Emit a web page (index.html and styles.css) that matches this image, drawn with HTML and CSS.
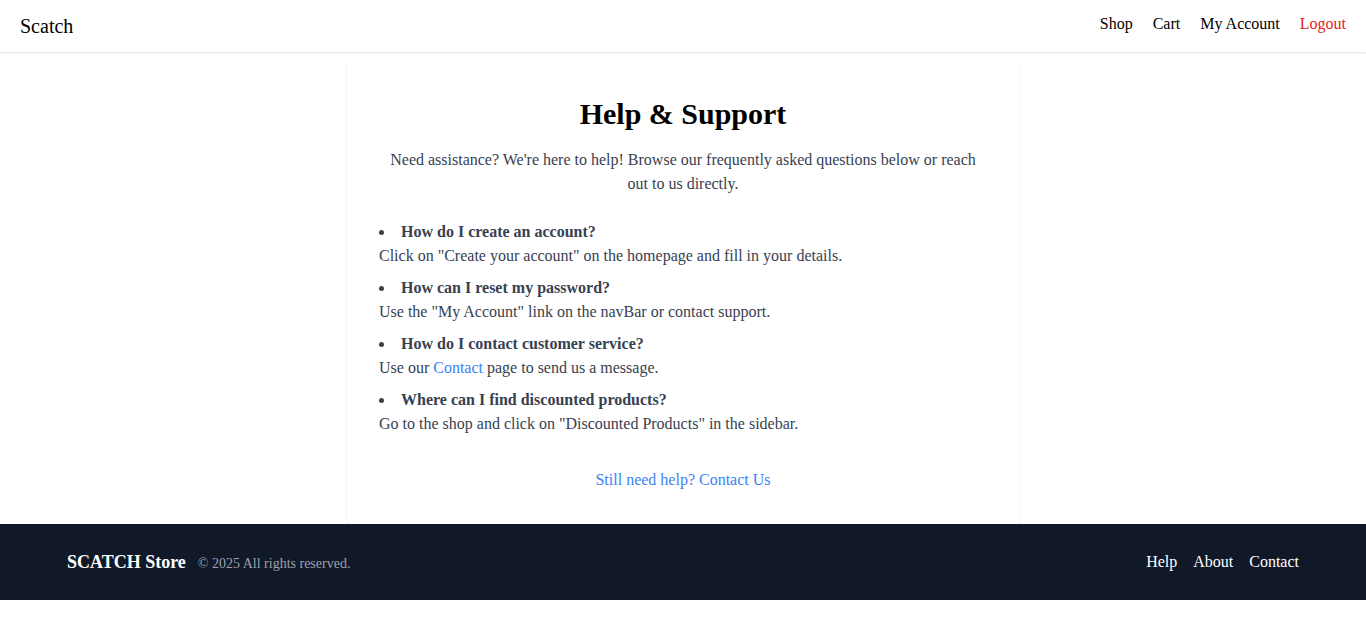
FILE: index.html
```html
<!DOCTYPE html>
<html lang="en">
<head>
<meta charset="utf-8">
<meta name="viewport" content="width=device-width, initial-scale=1">
<title>Help &amp; Support</title>
<link rel="stylesheet" href="styles.css">
</head>
<body>
<nav class="navbar">
  <a class="brand" href="#">Scatch</a>
  <div class="nav-links">
    <a href="#">Shop</a>
    <a href="#">Cart</a>
    <a href="#">My Account</a>
    <a class="logout" href="#">Logout</a>
  </div>
</nav>
<main class="help-card">
  <h1>Help &amp; Support</h1>
  <p class="intro">Need assistance? We're here to help! Browse our frequently asked questions below or reach out to us directly.</p>
  <ul class="faq">
    <li><strong>How do I create an account?</strong><br>Click on "Create your account" on the homepage and fill in your details.</li>
    <li><strong>How can I reset my password?</strong><br>Use the "My Account" link on the navBar or contact support.</li>
    <li><strong>How do I contact customer service?</strong><br>Use our <a class="link" href="#">Contact</a> page to send us a message.</li>
    <li><strong>Where can I find discounted products?</strong><br>Go to the shop and click on "Discounted Products" in the sidebar.</li>
  </ul>
  <div class="more"><a class="link" href="#">Still need help? Contact Us</a></div>
</main>
<footer class="footer">
  <div class="footer-inner">
    <div class="footer-brand"><span class="store">SCATCH Store</span><span class="rights">© 2025 All rights reserved.</span></div>
    <div class="footer-links">
      <a href="#">Help</a>
      <a href="#">About</a>
      <a href="#">Contact</a>
    </div>
  </div>
</footer>
</body>
</html>
```
FILE: styles.css
```css
* { box-sizing: border-box; margin: 0; padding: 0; }
body {
  font: 16px/24px "Liberation Serif", "Times New Roman", serif;
  color: #000;
  background: #fff;
}
a { color: inherit; text-decoration: none; }
.navbar {
  display: flex;
  justify-content: space-between;
  padding: 12px 20px;
  box-shadow: 0 1px 2px rgba(0, 0, 0, 0.14);
}
.brand { font-size: 20px; line-height: 28px; }
.nav-links { display: flex; gap: 20px; }
.logout { color: #e02424; }
.help-card {
  max-width: 672px;
  margin: 12px auto 0;
  padding: 32px;
  border-radius: 4px;
  box-shadow: 0 1px 3px rgba(0, 0, 0, 0.1);
}
.help-card h1 {
  font-size: 30px;
  line-height: 36px;
  text-align: center;
  margin-bottom: 16px;
}
.intro { text-align: center; color: #374151; margin-bottom: 24px; }
.faq { list-style: disc inside; color: #374151; }
.faq li + li { margin-top: 8px; }
.link { color: #3b82f6; }
.more { margin-top: 32px; text-align: center; }
.footer { background: #111827; color: #fff; padding: 24px 20px; }
.footer-inner {
  display: flex;
  justify-content: space-between;
  max-width: 1232px;
  margin: 0 auto;
}
.footer-brand { display: flex; align-items: baseline; gap: 12px; }
.store { font-size: 18px; line-height: 28px; font-weight: bold; }
.rights { font-size: 14px; line-height: 20px; color: #9ca3af; }
.footer-links { display: flex; align-items: center; gap: 16px; }
```
